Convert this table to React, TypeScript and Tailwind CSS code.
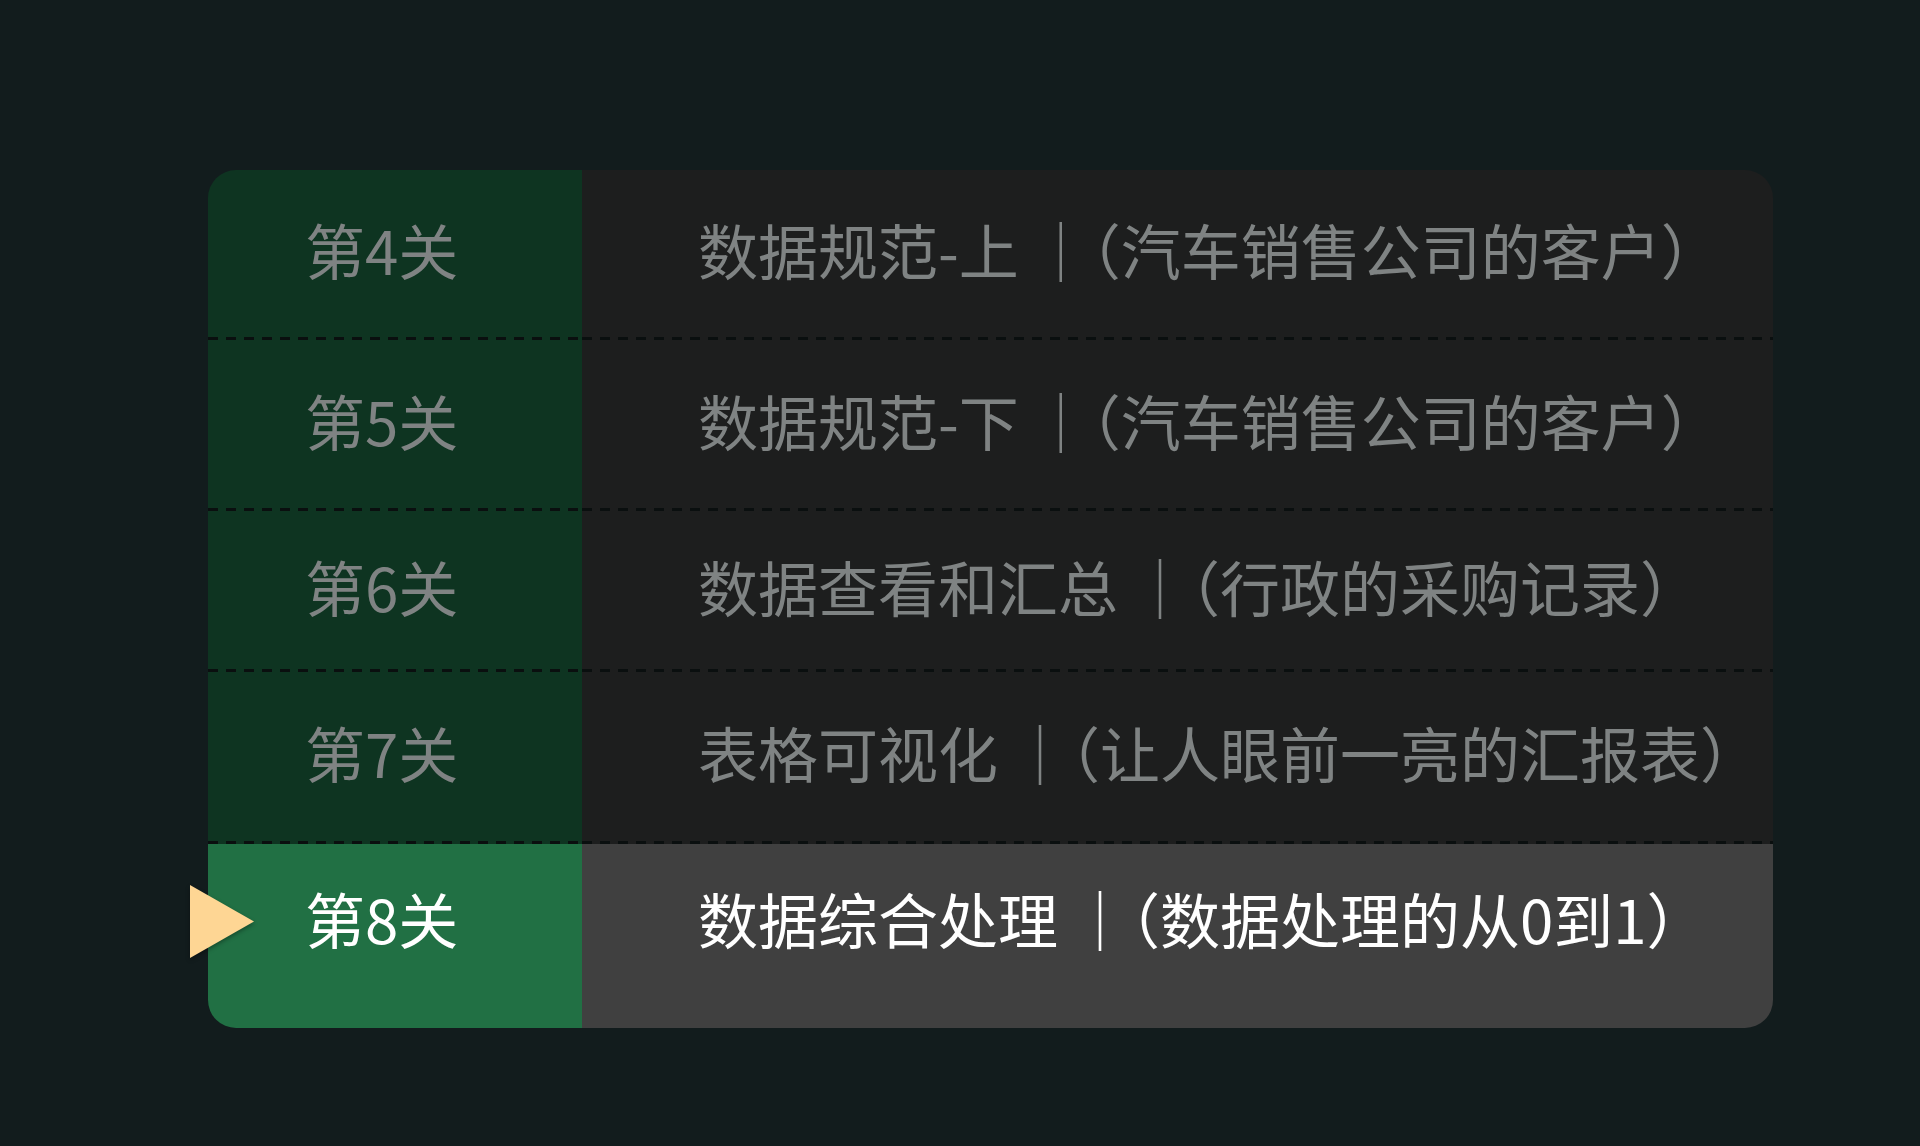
const LEVELS = [
  { no: 4, title: "数据规范-上", sub: "汽车销售公司的客户", h: "h-[170px]" },
  { no: 5, title: "数据规范-下", sub: "汽车销售公司的客户", h: "h-[171px]" },
  { no: 6, title: "数据查看和汇总", sub: "行政的采购记录", h: "h-[161px]" },
  { no: 7, title: "表格可视化", sub: "让人眼前一亮的汇报表", h: "h-[172px]" },
  { no: 8, title: "数据综合处理", sub: "数据处理的从0到1", h: "h-[184px]", active: true },
];

const DASH =
  "bg-[repeating-linear-gradient(90deg,#0a0f0f_0_10px,transparent_10px_18px)] bg-no-repeat bg-bottom bg-[length:100%_3px]";

export default function App() {
  return (
    <div className="min-h-[1146px] bg-[#121c1d] pl-[208px] pt-[170px] font-['Noto_Sans_CJK_SC','Noto_Sans',sans-serif]" lang="zh-CN">
      <div className="grid w-[1565px] grid-cols-[374px_minmax(0,1fr)]">
        {LEVELS.map((lv, i) => {
          const last = i === LEVELS.length - 1;
          const line = last ? "" : DASH;
          return (
            <div key={lv.no} className="contents">
              <div
                className={`relative flex items-center pl-[97px] ${lv.h} ${line} ${
                  lv.active
                    ? "bg-[#217044] text-white rounded-bl-[28px] pb-[36px]"
                    : "bg-[#0e3421] text-[#7f8383] pb-[12px]"
                } ${i === 0 ? "rounded-tl-[28px]" : ""}`}
              >
                {lv.active && (
                  <svg
                    className="absolute left-[-18px] top-[41px] drop-shadow-[0_2px_2px_rgba(0,0,0,0.35)]"
                    width="64"
                    height="73"
                    viewBox="0 0 64 73"
                  >
                    <polygon points="0,0 64,36.5 0,73" fill="#fed694" />
                  </svg>
                )}
                <span className="text-[60px] leading-none">第{lv.no}关</span>
              </div>
              <div
                className={`flex items-center pl-[116px] ${lv.h} ${line} ${
                  lv.active
                    ? "bg-[#404040] text-white rounded-br-[28px] pb-[36px]"
                    : "bg-[#1d1e1e] text-[#7f8383] pb-[12px]"
                } ${i === 0 ? "rounded-tr-[28px]" : ""}`}
              >
                <span className="text-[60px] leading-none whitespace-nowrap">
                  <span>{lv.title}</span>
                  <span className="ml-[12px]">｜</span>
                  <span className="[font-feature-settings:'halt']">（{lv.sub}）</span>
                </span>
              </div>
            </div>
          );
        })}
      </div>
    </div>
  );
}
